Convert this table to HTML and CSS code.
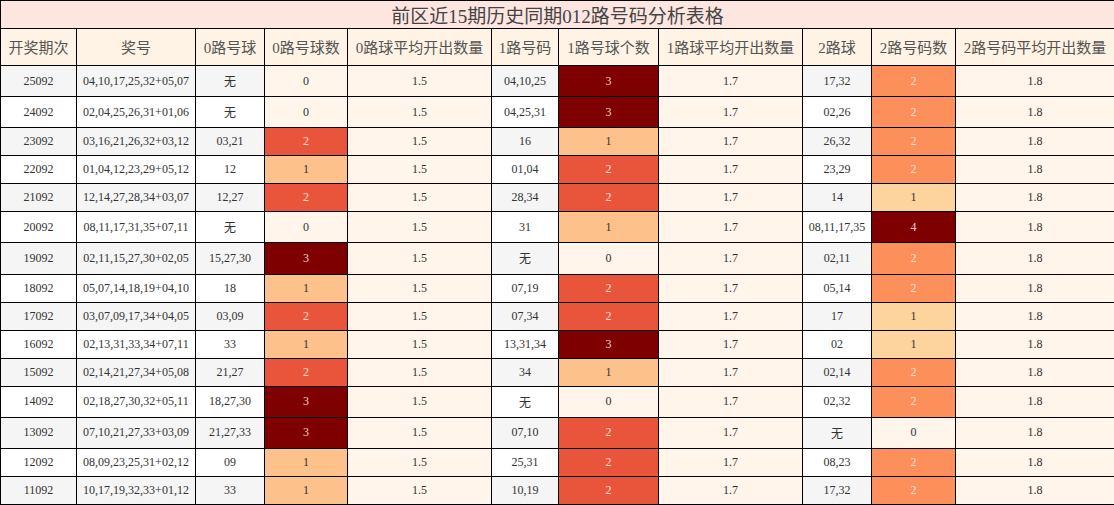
FILE: index.html
```html
<!DOCTYPE html>
<html lang="zh">
<head>
<meta charset="utf-8">
<title>前区近15期历史同期012路号码分析表格</title>
<link rel="stylesheet" href="styles.css">
</head>
<body>
<table class="tbl">
  <colgroup>
    <col class="c-qc"><col class="c-jh"><col class="c-h0"><col class="c-n0"><col class="c-a0">
    <col class="c-h1"><col class="c-n1"><col class="c-a1"><col class="c-h2"><col class="c-n2"><col class="c-a2">
  </colgroup>
  <thead>
    <tr><th class="title" colspan="11">前区近15期历史同期012路号码分析表格</th></tr>
    <tr class="head">
      <th>开奖期次</th><th>奖号</th><th>0路号球</th><th>0路号球数</th><th>0路球平均开出数量</th>
      <th>1路号码</th><th>1路号球个数</th><th>1路球平均开出数量</th><th>2路球</th><th>2路号码数</th><th>2路号码平均开出数量</th>
    </tr>
  </thead>
  <tbody>
    <tr class="odd"><td class="p">25092</td><td class="p">04,10,17,25,32+05,07</td><td class="p">无</td><td class="v0">0</td><td class="avg">1.5</td><td class="p">04,10,25</td><td class="v3">3</td><td class="avg">1.7</td><td class="p">17,32</td><td class="w2">2</td><td class="avg">1.8</td></tr>
    <tr><td class="p">24092</td><td class="p">02,04,25,26,31+01,06</td><td class="p">无</td><td class="v0">0</td><td class="avg">1.5</td><td class="p">04,25,31</td><td class="v3">3</td><td class="avg">1.7</td><td class="p">02,26</td><td class="w2">2</td><td class="avg">1.8</td></tr>
    <tr class="odd"><td class="p">23092</td><td class="p">03,16,21,26,32+03,12</td><td class="p">03,21</td><td class="v2">2</td><td class="avg">1.5</td><td class="p">16</td><td class="v1">1</td><td class="avg">1.7</td><td class="p">26,32</td><td class="w2">2</td><td class="avg">1.8</td></tr>
    <tr><td class="p">22092</td><td class="p">01,04,12,23,29+05,12</td><td class="p">12</td><td class="v1">1</td><td class="avg">1.5</td><td class="p">01,04</td><td class="v2">2</td><td class="avg">1.7</td><td class="p">23,29</td><td class="w2">2</td><td class="avg">1.8</td></tr>
    <tr class="odd"><td class="p">21092</td><td class="p">12,14,27,28,34+03,07</td><td class="p">12,27</td><td class="v2">2</td><td class="avg">1.5</td><td class="p">28,34</td><td class="v2">2</td><td class="avg">1.7</td><td class="p">14</td><td class="w1">1</td><td class="avg">1.8</td></tr>
    <tr><td class="p">20092</td><td class="p">08,11,17,31,35+07,11</td><td class="p">无</td><td class="v0">0</td><td class="avg">1.5</td><td class="p">31</td><td class="v1">1</td><td class="avg">1.7</td><td class="p">08,11,17,35</td><td class="w4">4</td><td class="avg">1.8</td></tr>
    <tr class="odd"><td class="p">19092</td><td class="p">02,11,15,27,30+02,05</td><td class="p">15,27,30</td><td class="v3">3</td><td class="avg">1.5</td><td class="p">无</td><td class="v0">0</td><td class="avg">1.7</td><td class="p">02,11</td><td class="w2">2</td><td class="avg">1.8</td></tr>
    <tr><td class="p">18092</td><td class="p">05,07,14,18,19+04,10</td><td class="p">18</td><td class="v1">1</td><td class="avg">1.5</td><td class="p">07,19</td><td class="v2">2</td><td class="avg">1.7</td><td class="p">05,14</td><td class="w2">2</td><td class="avg">1.8</td></tr>
    <tr class="odd"><td class="p">17092</td><td class="p">03,07,09,17,34+04,05</td><td class="p">03,09</td><td class="v2">2</td><td class="avg">1.5</td><td class="p">07,34</td><td class="v2">2</td><td class="avg">1.7</td><td class="p">17</td><td class="w1">1</td><td class="avg">1.8</td></tr>
    <tr><td class="p">16092</td><td class="p">02,13,31,33,34+07,11</td><td class="p">33</td><td class="v1">1</td><td class="avg">1.5</td><td class="p">13,31,34</td><td class="v3">3</td><td class="avg">1.7</td><td class="p">02</td><td class="w1">1</td><td class="avg">1.8</td></tr>
    <tr class="odd"><td class="p">15092</td><td class="p">02,14,21,27,34+05,08</td><td class="p">21,27</td><td class="v2">2</td><td class="avg">1.5</td><td class="p">34</td><td class="v1">1</td><td class="avg">1.7</td><td class="p">02,14</td><td class="w2">2</td><td class="avg">1.8</td></tr>
    <tr><td class="p">14092</td><td class="p">02,18,27,30,32+05,11</td><td class="p">18,27,30</td><td class="v3">3</td><td class="avg">1.5</td><td class="p">无</td><td class="v0">0</td><td class="avg">1.7</td><td class="p">02,32</td><td class="w2">2</td><td class="avg">1.8</td></tr>
    <tr class="odd"><td class="p">13092</td><td class="p">07,10,21,27,33+03,09</td><td class="p">21,27,33</td><td class="v3">3</td><td class="avg">1.5</td><td class="p">07,10</td><td class="v2">2</td><td class="avg">1.7</td><td class="p">无</td><td class="v0">0</td><td class="avg">1.8</td></tr>
    <tr><td class="p">12092</td><td class="p">08,09,23,25,31+02,12</td><td class="p">09</td><td class="v1">1</td><td class="avg">1.5</td><td class="p">25,31</td><td class="v2">2</td><td class="avg">1.7</td><td class="p">08,23</td><td class="w2">2</td><td class="avg">1.8</td></tr>
    <tr class="odd"><td class="p">11092</td><td class="p">10,17,19,32,33+01,12</td><td class="p">33</td><td class="v1">1</td><td class="avg">1.5</td><td class="p">10,19</td><td class="v2">2</td><td class="avg">1.7</td><td class="p">17,32</td><td class="w2">2</td><td class="avg">1.8</td></tr>
  </tbody>
</table>
</body>
</html>
```
FILE: styles.css
```css
html, body {
  margin: 0;
  padding: 0;
  background: #ffffff;
}

.tbl {
  width: 1114px;
  table-layout: fixed;
  border-collapse: collapse;
  font-family: "Liberation Serif", "Noto Sans CJK SC", serif;
  color: #333333;
}

.c-qc { width: 76px; }
.c-jh { width: 119px; }
.c-h0 { width: 69px; }
.c-n0 { width: 83px; }
.c-a0 { width: 144px; }
.c-h1 { width: 67px; }
.c-n1 { width: 100px; }
.c-a1 { width: 144px; }
.c-h2 { width: 69px; }
.c-n2 { width: 84px; }
.c-a2 { width: 159px; }

.tbl th,
.tbl td {
  border: 1px solid #000000;
  text-align: center;
  white-space: nowrap;
  overflow: hidden;
}

.title {
  background: #fde6e0;
  color: #444444;
  font-size: 19px;
  font-weight: normal;
  padding: 0;
  border-bottom-width: 2px;
}

.head th {
  background: #fef3e4;
  color: #555555;
  font-size: 15px;
  font-weight: normal;
  padding: 7px 2px 8px;
}

.tbl td {
  font-size: 12px;
  padding: 6px 2px 6.08px;
  background: #ffffff;
}

.tbl tr.odd td.p { background: #f5f5f5; }

.tbl td.avg { background: #fff5eb; }

.tbl td.v0 { background: #fff5eb; color: #333333; }
.tbl td.v1 { background: #fdc28c; color: #333333; }
.tbl td.v2 { background: #e8553b; color: #fde3da; }
.tbl td.v3 { background: #7f0000; color: #f2cfcf; }

.tbl td.w1 { background: #fdd49e; color: #333333; }
.tbl td.w2 { background: #fd8f5a; color: #fee6dc; }
.tbl td.w4 { background: #7f0000; color: #f2cfcf; }
```
